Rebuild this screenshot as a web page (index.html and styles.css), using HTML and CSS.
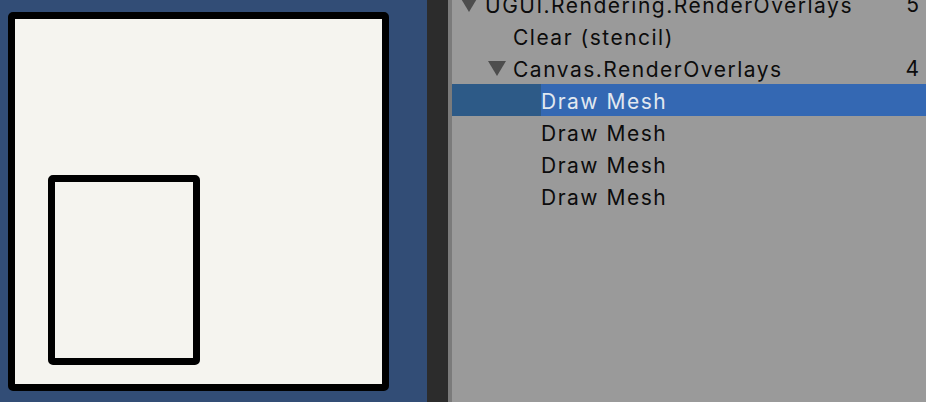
FILE: index.html
```html
<!DOCTYPE html>
<html lang="en">
<head>
  <meta charset="UTF-8" />
  <title>Frame Debugger</title>
  <link rel="stylesheet" href="styles.css">
</head>
<body>
  <div class="viewport">
    <div class="frame">
      <div class="rect"></div>
    </div>
  </div>
  <div class="splitter"></div>
  <ul class="tree">
    <li class="row level-0"><span class="arrow"></span><span class="label">UGUI.Rendering.RenderOverlays</span><span class="count">5</span></li>
    <li class="row level-1"><span class="label">Clear (stencil)</span></li>
    <li class="row level-0b"><span class="arrow"></span><span class="label">Canvas.RenderOverlays</span><span class="count">4</span></li>
    <li class="row level-2 selected"><span class="label">Draw Mesh</span></li>
    <li class="row level-2"><span class="label">Draw Mesh</span></li>
    <li class="row level-2"><span class="label">Draw Mesh</span></li>
    <li class="row level-2"><span class="label">Draw Mesh</span></li>
  </ul>
</body>
</html>
```

FILE: styles.css
```css
html, body {
  height: 100%;
}
body {
  margin: 0;
  display: flex;
  font-family: Inter, "Noto Sans", sans-serif;
  background: #9a9a9a;
  overflow: hidden;
}
.viewport {
  width: 427px;
  flex-shrink: 0;
  background: #324d76;
  padding: 12px 0 0 8px;
  box-sizing: border-box;
}
.frame {
  width: 381px;
  height: 379px;
  box-sizing: border-box;
  border: 7px solid #000;
  border-radius: 5px;
  background: #f5f4ef;
  padding: 156px 0 0 33px;
}
.rect {
  width: 152px;
  height: 190px;
  box-sizing: border-box;
  border: 7px solid #000;
  border-radius: 5px;
}
.splitter {
  width: 21px;
  flex-shrink: 0;
  background: #2c2c2c;
  border-right: 4px solid #7b7b7b;
}
.tree {
  flex: 1;
  list-style: none;
  margin: -12px 0 0 0;
  padding: 0;
}
.row {
  display: flex;
  align-items: center;
  height: 32px;
  font-size: 21px;
  letter-spacing: 1.5px;
  color: #0c0c0c;
  padding-right: 7px;
}
.label {
  flex: 1;
  height: 32px;
  line-height: 32px;
  padding-top: 2px;
  box-sizing: border-box;
  white-space: nowrap;
}
.count {
  line-height: 32px;
  padding-top: 2px;
  letter-spacing: 0;
}
.arrow {
  width: 0;
  height: 0;
  border-left: 9px solid transparent;
  border-right: 9px solid transparent;
  border-top: 15px solid #4d4d4d;
  margin-right: 7px;
}
.level-0 { padding-left: 8px; }
.level-0b { padding-left: 36px; }
.level-1 { padding-left: 61px; }
.level-2 { padding-left: 89px; }
.selected {
  background: #2d5a87;
  padding-right: 0;
}
.selected .label {
  background: #3468b3;
  color: #e2e8f0;
}
```
